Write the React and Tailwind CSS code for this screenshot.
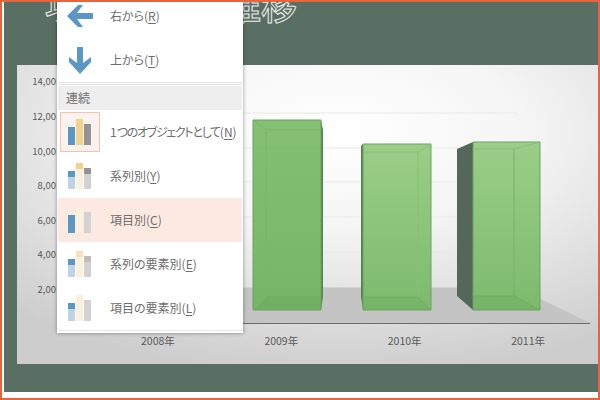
const FONT = "font-['Noto_Sans_CJK_JP','Noto_Sans',sans-serif]";

function Bars({ variant }) {
  return (
    <svg width="24" height="26" viewBox="0 0 24 26">
      {variant.map((r, i) => (
        <rect key={i} x={r[0]} y={r[1]} width={r[2]} height={r[3]} fill={r[4]} />
      ))}
    </svg>
  );
}

const B = "#5b97c5";
const BL = "#bfd3e6";
const Y = "#f3d28f";
const YL = "#faf0dc";
const G = "#939393";
const GL = "#d2d2d2";

const icons = {
  one: [[0, 8, 7, 18, B], [8, 0, 7, 26, Y], [16, 5, 7, 21, G]],
  series: [[0, 8, 7, 6, B], [0, 14, 7, 12, BL], [8, 0, 7, 6, Y], [8, 6, 7, 20, YL], [16, 5, 7, 6, G], [16, 11, 7, 15, GL]],
  item: [[0, 8, 7, 18, B], [8, 0, 7, 26, YL], [16, 5, 7, 21, GL]],
  seriesEl: [[0, 8, 7, 6, B], [0, 14, 7, 12, BL], [8, 0, 7, 6, "#f6e2b8"], [8, 6, 7, 20, YL], [16, 5, 7, 6, "#bdbdbd"], [16, 11, 7, 15, GL]],
  itemEl: [[0, 8, 7, 6, B], [0, 14, 7, 12, BL], [8, 0, 7, 26, YL], [16, 5, 7, 21, GL]],
};

function Label({ text, k, tight }) {
  return (
    <span className="text-[12px] leading-4 text-[#6e6e6e] whitespace-nowrap [font-feature-settings:'palt']">
      <span className={tight ? "tracking-[-1.3px]" : ""}>{text}</span>(<span className="underline underline-offset-2">{k}</span>)
    </span>
  );
}

function Row({ icon, text, k, active, selected, tight, children }) {
  return (
    <div className={`mx-px h-11 flex items-center ${active ? "bg-[#fceae2]" : ""}`}>
      <div className="w-[52px] pl-[2px] shrink-0">
        <div className={`w-10 h-10 flex items-center justify-center ${selected ? "border border-[#f6c3a5] bg-[#f9f2ee]" : ""}`}>
          {children || <Bars variant={icons[icon]} />}
        </div>
      </div>
      <Label text={text} k={k} tight={tight} />
    </div>
  );
}

function Chart() {
  return (
    <svg viewBox="0 0 581 299" className="w-full h-full block">
      <defs>
        <radialGradient id="pg" cx="0.55" cy="0.22" r="0.82">
          <stop offset="0" stopColor="#ffffff" />
          <stop offset="0.4" stopColor="#f5f5f5" />
          <stop offset="1" stopColor="#cdcdcd" />
        </radialGradient>
        <linearGradient id="front" x1="0" y1="0" x2="0" y2="1">
          <stop offset="0" stopColor="#85c074" />
          <stop offset="1" stopColor="#76b568" />
        </linearGradient>
        <linearGradient id="front2" x1="0" y1="0" x2="0" y2="1">
          <stop offset="0" stopColor="#9bce88" />
          <stop offset="1" stopColor="#7cba6e" />
        </linearGradient>
      </defs>
      <rect width="581" height="299" fill="url(#pg)" />
      {[48, 83, 117, 152, 187].map((y) => (
        <line key={y} x1="226" x2="500" y1={y} y2={y} stroke="#e9e9e9" strokeWidth="1" />
      ))}
      <polygon points="226,222.5 500,222.5 573,258 226,258" fill="#c4c4c4" />
      <line x1="226" x2="573" y1="258.5" y2="258.5" stroke="#6c6c6c" strokeWidth="1" />

      <polygon points="304,55 306,65 306,232 304,245" fill="#56844e" />
      <polygon points="236,55 304,55 304,245 236,245" fill="url(#front)" stroke="#6aa25d" strokeWidth="1" />
      {[83, 117, 152, 187].map((y) => (
        <line key={y} x1="236" x2="304" y1={y} y2={y} stroke="#7fbb70" strokeWidth="1" opacity="0.5" />
      ))}
      <polygon points="236,245 249,232 304,232 304,245" fill="#5da253" opacity="0.2" />
      <polyline points="236,55 249,65 304,65" fill="none" stroke="#78b569" />
      <polyline points="249,65 249,232 236,245" fill="none" stroke="#78b569" />
      <line x1="249" x2="304" y1="232" y2="232" stroke="#6fae60" />

      <polygon points="344,81 346,79 346,245 344,232" fill="#567e50" />
      <polygon points="346,79 414,79 414,245 346,245" fill="url(#front2)" stroke="#6aa25d" strokeWidth="1" />
      <polygon points="346,232 401,232 414,245 346,245" fill="#5da253" opacity="0.2" />
      <line x1="346" x2="401" y1="87" y2="87" stroke="#85c076" />
      <line x1="346" x2="401" y1="232" y2="232" stroke="#6fae60" />
      <line x1="401" x2="401" y1="87" y2="232" stroke="#85c076" />
      <line x1="401" x2="414" y1="232" y2="245" stroke="#6fae60" />
      <line x1="401" x2="414" y1="87" y2="79" stroke="#85c076" />

      <polygon points="440,84 456,77 456,245 440,231" fill="#55675a" />
      <polygon points="456,77 523,77 523,245 456,245" fill="url(#front2)" stroke="#6aa25d" strokeWidth="1" />
      <polygon points="456,231 497,231 523,245 456,245" fill="#5da253" opacity="0.2" />
      <line x1="456" x2="497" y1="84" y2="84" stroke="#85c076" />
      <line x1="497" x2="497" y1="84" y2="231" stroke="#75b466" />
      <line x1="497" x2="523" y1="84" y2="77" stroke="#85c076" />
      <line x1="456" x2="497" y1="231" y2="231" stroke="#6fae60" />
      <line x1="497" x2="523" y1="231" y2="245" stroke="#6fae60" />
    </svg>
  );
}

export default function App() {
  const yLabels = ["14,00", "12,00", "10,00", "8,00", "6,00", "4,00", "2,00"];
  const xLabels = ["2008年", "2009年", "2010年", "2011年"];
  return (
    <div className={`relative w-[600px] h-[400px] overflow-hidden bg-white border-2 border-[#e8643a] ${FONT}`}>
      <div className="ml-[2px] h-[390px] bg-[#5a6f63] flex flex-col pl-[13px]">
        <div className="h-[63px] shrink-0 pl-[28px]">
          <div className="-mt-[16px] text-[36px] leading-9 font-medium text-[#5a6f63] [-webkit-text-stroke:1px_#eeeeee] whitespace-nowrap">
            項目別売上推移
          </div>
        </div>
        <div className="relative h-[299px] shrink-0">
          <Chart />
          <div className="absolute left-0 -top-px w-[39px] text-[9.5px] text-[#595959] flex flex-col">
            {yLabels.map((t) => (
              <div key={t} className="h-[34.67px] flex items-center justify-end">{t}</div>
            ))}
          </div>
          <div className="absolute left-[124px] top-[268px] flex text-[10.5px] leading-4 text-[#595959]">
            {xLabels.map((t) => (
              <div key={t} className="w-[123.4px]">{t}</div>
            ))}
          </div>
        </div>
      </div>

      {/* dropdown menu */}
      <div className="absolute left-[55px] -top-[8px] w-[186px] h-[339px] bg-white shadow-[0_0_4px_rgba(0,0,0,0.4)]">
        <Row text="右から" k="R">
          <svg width="26" height="22" viewBox="0 0 26 22">
            <path d="M11 0 L16 0 L10 8 L26 8 L26 14 L10 14 L16 22 L11 22 L0 11 Z" fill="#5b97c5" />
          </svg>
        </Row>
        <Row text="上から" k="T">
          <svg width="22" height="27" viewBox="0 0 22 27">
            <path d="M8 0 L14 0 L14 16 L22 10 L22 15 L11 27 L0 15 L0 10 L8 16 Z" fill="#5b97c5" />
          </svg>
        </Row>
        <div className="mx-px h-[3px] border-y border-[#e6e6e6]" />
        <div className="mx-px mt-px h-6 bg-[#eeeeee] pl-2 flex items-center text-[12px] font-medium text-[#808080]">連続</div>
        <Row icon="one" text="1 つのオブジェクトとして" k="N" selected tight />
        <Row icon="series" text="系列別" k="Y" />
        <Row icon="item" text="項目別" k="C" active />
        <Row icon="seriesEl" text="系列の要素別" k="E" />
        <Row icon="itemEl" text="項目の要素別" k="L" />
        <div className="mx-px h-px bg-[#e6e6e6]" />
      </div>
    </div>
  );
}
